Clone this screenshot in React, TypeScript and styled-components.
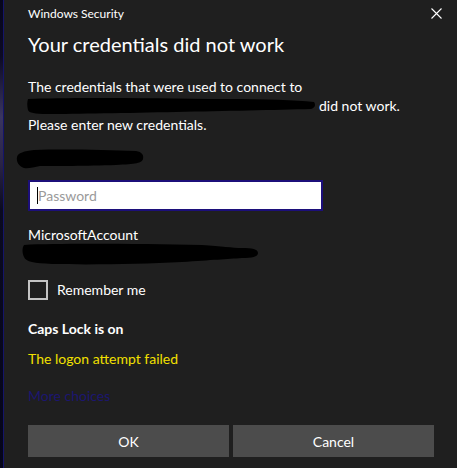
import React from "react";
import styled, { createGlobalStyle } from "styled-components";

const GlobalStyle = createGlobalStyle`
  html, body { margin: 0; padding: 0; background: #05051a; }
  #root { width: 457px; height: 468px; }
`;

const Screen = styled.div`
  display: flex;
  width: 457px;
  height: 468px;
  overflow: hidden;
  font-family: Lato, "Noto Sans", sans-serif;
  color: #ffffff;
`;

const Wallpaper = styled.div`
  width: 3px;
  flex: none;
  background: linear-gradient(180deg, #06061c 0%, #0c0a24 12%, #3a3560 25%, #2a2446 35%, #0a0a20 45%, #05051a 100%);
  border-right: 1px solid #14146a;
`;

const Dialog = styled.div`
  flex: 1;
  display: flex;
  flex-direction: column;
  background: #1f1f1f;
  padding: 0 23px 0 24px;
`;

const Header = styled.div`
  display: flex;
  align-items: center;
  justify-content: space-between;
  height: 27px;
  margin-right: -23px;
`;

const Caption = styled.span`
  font-size: 12px;
  color: #ffffff;
`;

const CloseButton = styled.div`
  width: 42px;
  height: 27px;
  display: flex;
  align-items: center;
  justify-content: center;
`;

const Title = styled.h1`
  margin: 3px 0 0;
  font-size: 20px;
  font-weight: 400;
  line-height: 28px;
  color: #ffffff;
`;

const Body = styled.div`
  margin-top: 19px;
  font-size: 14px;
  line-height: 19px;
  color: #ffffff;
`;

const BodyLine = styled.div`
  display: flex;
  align-items: center;
  height: 19px;
`;

const Scribble = styled.svg<{ $ml?: number; $mt?: number }>`
  display: block;
  flex: none;
  margin-left: ${(p) => p.$ml ?? 0}px;
  margin-top: ${(p) => p.$mt ?? 0}px;
`;

const Tail = styled.span`
  margin-left: 3px;
`;

const PasswordBox = styled.div`
  margin-top: 10px;
  width: 295px;
  height: 31px;
  box-sizing: border-box;
  background: #ffffff;
  border: 2px solid #1c0f7a;
  display: flex;
  align-items: center;
  padding-left: 7px;
`;

const Caret = styled.span`
  width: 1px;
  height: 17px;
  background: #000000;
`;

const Placeholder = styled.span`
  font-size: 14px;
  color: #9a9a9a;
`;

const Label = styled.div`
  margin-top: 14px;
  font-size: 14px;
  line-height: 19px;
`;

const CheckRow = styled.div`
  display: flex;
  align-items: center;
  gap: 9px;
  margin-top: 14px;
  font-size: 14px;
  line-height: 20px;
`;

const Checkbox = styled.span`
  width: 20px;
  height: 20px;
  box-sizing: border-box;
  border: 2px solid #c4c4c4;
`;

const Message = styled.div<{ $color: string; $bold?: boolean; $mt: number }>`
  margin-top: ${(p) => p.$mt}px;
  font-size: 14px;
  line-height: 19px;
  color: ${(p) => p.$color};
  font-weight: ${(p) => (p.$bold ? 700 : 400)};
`;

const Buttons = styled.div`
  display: grid;
  grid-template-columns: 1fr 1fr;
  gap: 4px;
  margin-top: 20px;
`;

const Button = styled.div`
  height: 32px;
  background: #4c4c4c;
  display: flex;
  align-items: center;
  justify-content: center;
  font-size: 14px;
  color: #ffffff;
`;

export default function App() {
  return (
    <>
      <GlobalStyle />
      <Screen>
        <Wallpaper />
        <Dialog>
          <Header>
            <Caption>Windows Security</Caption>
            <CloseButton>
              <svg width="11" height="11" viewBox="0 0 11 11">
                <path d="M0.5 0.5 L10.5 10.5 M10.5 0.5 L0.5 10.5" stroke="#ffffff" strokeWidth="1.1" />
              </svg>
            </CloseButton>
          </Header>
          <Title>Your credentials did not work</Title>
          <Body>
            <BodyLine>The credentials that were used to connect to</BodyLine>
            <BodyLine>
              <Scribble $ml={-1} width="289" height="19" viewBox="0 0 291 19">
                <path
                  d="M1 3 C40 1 120 2 200 3 C240 3 270 4 289 6 C291 9 290 12 286 13 C250 14 200 15 150 16 C100 17 50 18 20 18 C8 18 2 17 1 14 C0 10 0 6 1 3 Z"
                  fill="#000000"
                />
              </Scribble>
              <Tail>did not work.</Tail>
            </BodyLine>
            <BodyLine>Please enter new credentials.</BodyLine>
          </Body>
          <Scribble $ml={-12} $mt={14} width="128" height="22" viewBox="0 0 128 22">
            <path
              d="M18 2 C50 1 90 2 120 3 C126 4 128 7 127 11 C126 15 120 16 100 17 C70 18 40 18 24 18 C18 19 12 21 8 20 C3 18 0 14 1 9 C2 5 8 3 18 2 Z"
              fill="#000000"
            />
          </Scribble>
          <PasswordBox>
            <Caret />
            <Placeholder>Password</Placeholder>
          </PasswordBox>
          <Label>MicrosoftAccount</Label>
          <Scribble $ml={-6} $mt={-1} width="237" height="23" viewBox="0 0 237 23">
            <path
              d="M2 2 C40 0 120 1 180 2 C200 3 210 5 220 5 C230 5 236 6 236 10 C236 14 230 15 220 15 C205 16 190 17 160 19 C120 21 70 22 30 21 C12 20 4 19 2 14 C0 10 0 5 2 2 Z"
              fill="#000000"
            />
          </Scribble>
          <CheckRow>
            <Checkbox />
            <span>Remember me</span>
          </CheckRow>
          <Message $color="#ffffff" $bold $mt={19}>Caps Lock is on</Message>
          <Message $color="#f2e000" $mt={11}>The logon attempt failed</Message>
          <Message $color="#1c1670" $mt={18}>More choices</Message>
          <Buttons>
            <Button>OK</Button>
            <Button>Cancel</Button>
          </Buttons>
        </Dialog>
      </Screen>
    </>
  );
}
